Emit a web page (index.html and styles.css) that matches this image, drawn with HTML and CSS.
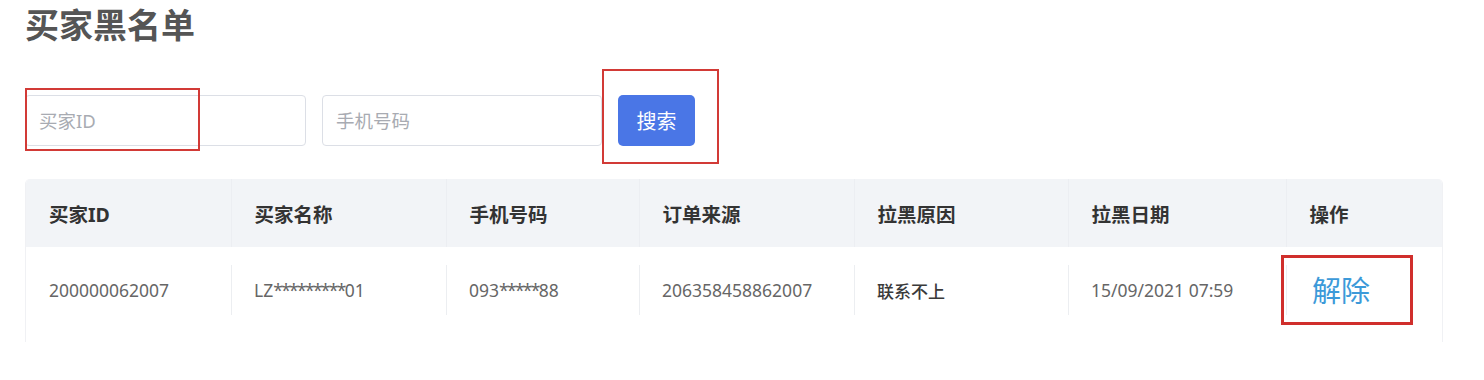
FILE: index.html
```html
<!DOCTYPE html>
<html lang="zh-CN">
<head>
    <meta charset="UTF-8">
    <meta name="viewport" content="width=device-width, initial-scale=1.0">
    <title>买家黑名单</title>
    <link rel="stylesheet" href="styles.css">
</head>
<body>
    <div class="page">
        <h1 class="page-title">买家黑名单</h1>

        <!-- Search bar -->
        <div class="search-bar">
            <div class="field">
                <input type="text" class="field-input" placeholder="买家ID">
                <span class="mark mark-id"></span>
            </div>
            <div class="field field-phone">
                <input type="text" class="field-input" placeholder="手机号码">
            </div>
            <div class="mark-box">
                <button class="search-btn">搜索</button>
            </div>
        </div>

        <!-- Blacklist table -->
        <div class="table-wrap">
            <table class="blacklist">
                <colgroup>
                    <col style="width: 205px">
                    <col style="width: 215px">
                    <col style="width: 193px">
                    <col style="width: 215px">
                    <col style="width: 214px">
                    <col style="width: 218px">
                    <col style="width: 158px">
                </colgroup>
                <thead>
                    <tr>
                        <th>买家ID</th>
                        <th>买家名称</th>
                        <th>手机号码</th>
                        <th>订单来源</th>
                        <th>拉黑原因</th>
                        <th>拉黑日期</th>
                        <th>操作</th>
                    </tr>
                </thead>
                <tbody>
                    <tr>
                        <td>200000062007</td>
                        <td>LZ<span class="masked">*********</span>01</td>
                        <td>093<span class="masked">*****</span>88</td>
                        <td>206358458862007</td>
                        <td class="reason">联系不上</td>
                        <td>15/09/2021 07:59</td>
                        <td class="action"><a href="#" class="unblock">解除</a></td>
                    </tr>
                </tbody>
            </table>
        </div>
    </div>
</body>
</html>
```

FILE: styles.css
```css
body {
    margin: 0;
    padding: 0;
    background-color: #fff;
    font-family: "Noto Sans", "Noto Sans CJK SC", sans-serif;
    color: #333;
}

.page {
    padding: 0 25px;
}

.page-title {
    margin: 0;
    font-size: 34px;
    line-height: 50px;
    font-weight: bold;
    color: #555;
}

/* Search bar */
.search-bar {
    display: flex;
    align-items: flex-start;
    margin-top: 19px;
}
.field {
    position: relative;
    margin-top: 26px;
}
.field-phone {
    margin-left: 16px;
}
.field-input {
    box-sizing: border-box;
    width: 281px;
    height: 51px;
    padding: 0 13px;
    border: 1px solid #dcdfe6;
    border-radius: 4px;
    font-family: "Noto Sans", "Noto Sans CJK SC", sans-serif;
    font-size: 18.5px;
    color: #333;
    outline: none;
}
.field-phone .field-input {
    width: 280px;
}
.field-input::placeholder {
    color: #a8abb2;
}

/* red highlight marks */
.mark {
    position: absolute;
    box-sizing: border-box;
    border: 2px solid #d23a36;
    pointer-events: none;
}
.mark-id {
    top: -7px;
    left: 0;
    width: 175px;
    height: 63px;
}
.mark-box {
    border: 2px solid #d23a36;
    padding: 24px 22px 16px 14px;
}

.search-btn {
    display: block;
    width: 77px;
    height: 51px;
    border: none;
    border-radius: 5px;
    background-color: #4a76e6;
    color: #fff;
    font-family: "Noto Sans CJK SC", sans-serif;
    font-size: 20px;
    cursor: pointer;
}

/* Table */
.table-wrap {
    margin-top: 15px;
    padding-bottom: 9px;
    border-left: 1px solid #f0f1f4;
    border-right: 1px solid #f0f1f4;
    border-radius: 5px 5px 0 0;
    overflow: hidden;
    width: 1418px;
    box-sizing: border-box;
}
.blacklist {
    width: 1416px;
    table-layout: fixed;
    border-collapse: collapse;
}
.blacklist th {
    height: 68px;
    padding: 0 0 0 23px;
    background-color: #f2f4f7;
    text-align: left;
    font-size: 19.5px;
    font-weight: bold;
    color: #333;
    border-left: 1px solid #eceef2;
}
.blacklist th:first-child {
    border-left: none;
}
.blacklist td {
    height: 86px;
    padding: 0 0 0 23px;
    font-size: 17.5px;
    color: #666;
    background: linear-gradient(#eceef1, #eceef1) left center / 1px 50px no-repeat;
}
.blacklist td:first-child {
    background: none;
}
.blacklist td.reason {
    font-size: 17px;
    font-weight: 500;
    color: #3a3a3a;
}
.blacklist td.action {
    padding-left: 0;
    vertical-align: middle;
}
.masked {
    letter-spacing: -1.7px;
}

.unblock {
    display: block;
    box-sizing: border-box;
    width: 132px;
    height: 70px;
    margin-left: -5px;
    padding-right: 12px;
    border: 3px solid #d02f2c;
    font-family: "Noto Sans CJK SC", sans-serif;
    font-size: 29px;
    line-height: 62px;
    text-align: center;
    color: #3c9ad9;
    text-decoration: none;
}
```
